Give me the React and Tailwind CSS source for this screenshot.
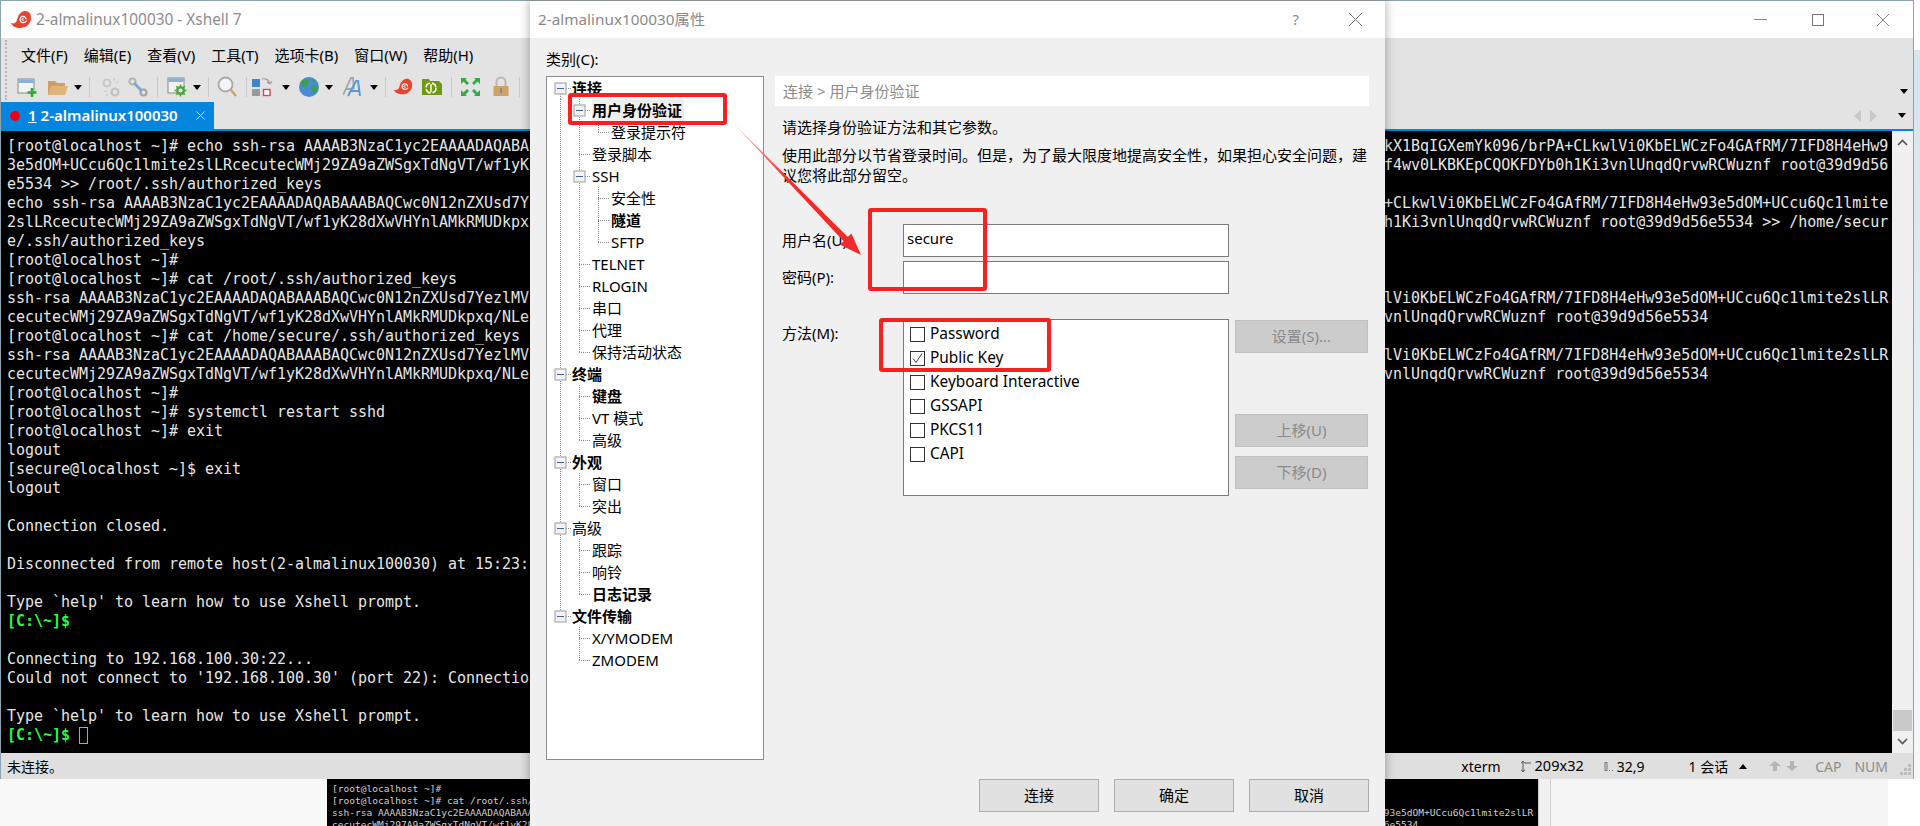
import React from "react";

const R1 = "lVi0KbELWCzFo4GAfRM/7IFD8H4eHw93e5dOM+UCcu6Qc1lmite2slLR";
const R2 = "vnlUnqdQrvwRCWuznf root@39d9d56e5534";
const L1 = "ssh-rsa AAAAB3NzaC1yc2EAAAADAQABAAABAQCwc0N12nZXUsd7YezlMVv";
const L2 = "cecutecWMj29ZA9aZWSgxTdNgVT/wf1yK28dXwVHYnlAMkRMUDkpxq/NLek";
const P = "[root@localhost ~]#";
const HELP = "Type `help' to learn how to use Xshell prompt.";
const LINES = [
  [P + " echo ssh-rsa AAAAB3NzaC1yc2EAAAADAQABAA", "kX1BqIGXemYk096/brPA+CLkwlVi0KbELWCzFo4GAfRM/7IFD8H4eHw9"],
  ["3e5dOM+UCcu6Qc1lmite2slLRcecutecWMj29ZA9aZWSgxTdNgVT/wf1yK28", "f4wv0LKBKEpCQOKFDYb0h1Ki3vnlUnqdQrvwRCWuznf root@39d9d56"],
  ["e5534 >> /root/.ssh/authorized_keys"],
  ["echo ssh-rsa AAAAB3NzaC1yc2EAAAADAQABAAABAQCwc0N12nZXUsd7Yez", "+CLkwlVi0KbELWCzFo4GAfRM/7IFD8H4eHw93e5dOM+UCcu6Qc1lmite"],
  ["2slLRcecutecWMj29ZA9aZWSgxTdNgVT/wf1yK28dXwVHYnlAMkRMUDkpxq/", "h1Ki3vnlUnqdQrvwRCWuznf root@39d9d56e5534 >> /home/secur"],
  ["e/.ssh/authorized_keys"],
  [P],
  [P + " cat /root/.ssh/authorized_keys"],
  [L1, R1],
  [L2, R2],
  [P + " cat /home/secure/.ssh/authorized_keys"],
  [L1, R1],
  [L2, R2],
  [P],
  [P + " systemctl restart sshd"],
  [P + " exit"],
  ["logout"],
  ["[secure@localhost ~]$ exit"],
  ["logout"],
  [""],
  ["Connection closed."],
  [""],
  ["Disconnected from remote host(2-almalinux100030) at 15:23:10."],
  [""],
  [HELP],
  ["[C:\\~]$", null, "green"],
  [""],
  ["Connecting to 192.168.100.30:22..."],
  ["Could not connect to '192.168.100.30' (port 22): Connection failed."],
  [""],
  [HELP],
  ["[C:\\~]$", null, "cursor"],
];

const TREE = [
  [0, "连接", 1],
  [1, "用户身份验证", 1, 1, 1],
  [2, "登录提示符"],
  [1, "登录脚本"],
  [1, "SSH", 0, 1],
  [2, "安全性"],
  [2, "隧道", 1],
  [2, "SFTP"],
  [1, "TELNET"],
  [1, "RLOGIN"],
  [1, "串口"],
  [1, "代理"],
  [1, "保持活动状态"],
  [0, "终端", 1],
  [1, "键盘", 1],
  [1, "VT 模式"],
  [1, "高级"],
  [0, "外观", 1],
  [1, "窗口"],
  [1, "突出"],
  [0, "高级"],
  [1, "跟踪"],
  [1, "响铃"],
  [1, "日志记录", 1],
  [0, "文件传输", 1],
  [1, "X/YMODEM"],
  [1, "ZMODEM"],
];

const hasNextSibling = (i) => {
  const lv = TREE[i][0];
  for (let j = i + 1; j < TREE.length; j++) {
    if (TREE[j][0] < lv) return false;
    if (TREE[j][0] === lv) return true;
  }
  return false;
};
const ancestorOf = (i, lv) => {
  for (let j = i - 1; j >= 0; j--) if (TREE[j][0] === lv) return j;
  return -1;
};
const GX = [13, 32, 51];

function Guide({ i }) {
  const [lv, , , exp] = TREE[i];
  const isExp = exp || lv === 0;
  const W = [25, 45, 64][lv];
  const x = GX[lv];
  const dot = { stroke: "#8a8a8a", strokeWidth: 1, strokeDasharray: "1 1", fill: "none" };
  const parts = [];
  for (let a = 0; a < lv; a++) {
    const anc = ancestorOf(i, a);
    if (anc >= 0 && hasNextSibling(anc)) parts.push(<path key={a} d={`M${GX[a] + 0.5} 0V22`} {...dot} />);
  }
  return (
    <svg width={W} height="22" className="shrink-0">
      {parts}
      <path d={`M${x + 0.5} ${i === 0 ? 11 : 0}V${hasNextSibling(i) ? 22 : 11}`} {...dot} />
      <path d={`M${x} 11.5H${x + 12}`} {...dot} />
      {isExp && (
        <g>
          <rect x={x - 5} y="6" width="11" height="11" fill="#f4f4f4" stroke="#9a9a9a" />
          <path d={`M${x - 3} 11.5H${x + 4}`} stroke="#3f5fa8" />
        </g>
      )}
    </svg>
  );
}

const Snail = ({ s = 22 }) => (
  <svg width={s} height={s} viewBox="0 0 22 22" className="shrink-0">
    <path d="M1 14c3 1 5 0 6-3C8 6 11 2 15 2c4 0 6 3 6 7 0 6-5 10-11 10-4 0-8-2-9-5z" fill="#e8432f" />
    <path d="M16 10.500c0-2-2-3.500-3.800-3-2 .6-2.800 3-1.600 4.800 1.500 2 4.800 1.600 6-.5" fill="none" stroke="#fff" strokeWidth="1.300" />
    <path d="M14 10c-.5-.8-1.800-.6-2 .3-.1 1 1 1.500 1.800 1" fill="none" stroke="#fff" strokeWidth="1" />
  </svg>
);

const Drop = ({ className = "" }) => (
  <svg width="8" height="5" viewBox="0 0 8 5" className={"shrink-0 " + className}>
    <path d="M0 0h8L4 5z" fill="#000" />
  </svg>
);
const Sep = ({ className = "" }) => <span className={"h-[20px] w-px shrink-0 bg-[#c9c9c9] " + className} />;

const IconNew = () => (
  <svg width="20" height="22" viewBox="0 0 20 22" className="shrink-0">
    <rect x="1" y="3" width="16" height="14" fill="#f2f2f2" stroke="#8a8a8a" />
    <rect x="1.500" y="3.500" width="15" height="3.500" fill="#8ab0da" />
    <path d="M15 12v9M10.500 16.500h9" stroke="#2bab3b" strokeWidth="2.600" />
  </svg>
);
const IconFolder = () => (
  <svg width="20" height="22" viewBox="0 0 20 22" className="ml-[11px] shrink-0">
    <path d="M0 5h7l2 2h8v12H0z" fill="#cf9f63" />
    <path d="M3 10h17l-3 9H0z" fill="#e0b47c" />
  </svg>
);
const IconBroken = () => (
  <svg width="20" height="22" viewBox="0 0 20 22" className="ml-[11px] shrink-0" opacity=".55">
    <circle cx="6" cy="7" r="3.500" fill="none" stroke="#b4b4b4" strokeWidth="2.200" />
    <circle cx="14" cy="16" r="3.500" fill="none" stroke="#a8a8a8" strokeWidth="2.200" />
    <path d="M13 2v3M17 5l-2 2M3 15h3M5 20l2-2" stroke="#bcbcbc" strokeWidth="1.500" />
  </svg>
);
const IconLink = () => (
  <svg width="20" height="22" viewBox="0 0 20 22" className="ml-[7px] shrink-0">
    <circle cx="4.500" cy="5.500" r="3" fill="none" stroke="#b5b5b5" strokeWidth="2.200" />
    <circle cx="15.500" cy="16.500" r="3" fill="none" stroke="#a5a5a5" strokeWidth="2.200" />
    <path d="M6 7l8 8" stroke="#7fa8d8" strokeWidth="3" />
  </svg>
);
const IconGear = () => (
  <svg width="20" height="22" viewBox="0 0 20 22" className="ml-[9px] shrink-0">
    <rect x="1" y="2" width="16" height="15" fill="#f2f2f2" stroke="#8a8a8a" />
    <rect x="1.500" y="2.500" width="15" height="3.500" fill="#8ab0da" />
    <circle cx="13.500" cy="14.500" r="3.300" fill="#f2f2f2" stroke="#49a83a" strokeWidth="2.400" />
    <path d="M13.500 8.500v2.500M13.500 18v2.500M7.500 14.500h2.500M17 14.500h2.500M9.300 10.300l1.800 1.800M16 17l1.800 1.800M9.300 18.700l1.800-1.800M16 12l1.800-1.800" stroke="#49a83a" strokeWidth="1.500" />
  </svg>
);
const IconSearch = () => (
  <svg width="20" height="22" viewBox="0 0 20 22" className="ml-[8px] shrink-0">
    <circle cx="8.500" cy="8.500" r="7" fill="#f4f4f4" stroke="#a9a9a9" strokeWidth="1.800" />
    <path d="M13.800 13.800L19 20" stroke="#cfa26a" strokeWidth="2.400" />
  </svg>
);
const IconLayout = () => (
  <svg width="22" height="22" viewBox="0 0 22 22" className="ml-[4px] shrink-0">
    <rect x="1" y="3" width="8" height="8" fill="#3f86c8" />
    <rect x="1" y="13" width="8" height="7" fill="#999" />
    <rect x="12.500" y="13.500" width="6.500" height="6" fill="#fff" stroke="#d8474f" strokeWidth="1.400" />
    <path d="M11 3c4-1 7 1 8 5M19 8l2-3M19 8l-3-2" fill="none" stroke="#9a9a9a" strokeWidth="1.200" />
  </svg>
);
const IconGlobe = () => (
  <svg width="20" height="22" viewBox="0 0 20 22" className="ml-[9px] shrink-0">
    <circle cx="10" cy="11" r="10" fill="#4a8cd2" />
    <path d="M5 3c3 0 5 1 5 3s-2 2-2 4-3 2-4 0-2-2-3-2c0-2 2-4 4-5zM13 10c3-1 6 0 6 2s-2 5-4 6c-1-2-1-3-2-4s-1-3 0-4zM12 3c2 0 3 1 4 2l-2 1z" fill="#3f9e55" />
  </svg>
);
const IconFont = () => (
  <svg width="20" height="22" viewBox="0 0 20 22" className="ml-[10px] shrink-0">
    <path d="M0 19L8 2h2l1 11M3 13h7" fill="none" stroke="#a8a8a8" strokeWidth="1.800" />
    <path d="M5 20L13 5h2l2 15M8 15h8" fill="none" stroke="#5b9ad8" strokeWidth="2" />
  </svg>
);
const IconGreenFolder = () => (
  <svg width="20" height="22" viewBox="0 0 20 22" className="ml-[9px] shrink-0">
    <path d="M0 3h7l1 2h9l3 3v11H0z" fill="#6f9a10" />
    <circle cx="9" cy="12" r="5" fill="none" stroke="#fff" strokeWidth="1.600" strokeDasharray="6 2" />
    <path d="M9 8v8" stroke="#fff" strokeWidth="1.400" />
  </svg>
);
const IconFull = () => (
  <svg width="19" height="22" viewBox="0 0 19 22" className="ml-[9px] shrink-0">
    <path d="M0 2h6L4.500 3.500 8 7 6 9 2.500 5.500 0 8zM19 2h-6l1.500 1.500L11 7l2 2 3.500-3.500L19 8zM0 20h6l-1.500-1.500L8 15l-2-2-3.500 3.500L0 14zM19 20h-6l1.500-1.500L11 15l2-2 3.500 3.500L19 14z" fill="#34a94a" />
  </svg>
);
const IconLock = () => (
  <svg width="16" height="22" viewBox="0 0 16 22" className="ml-[13px] shrink-0">
    <path d="M3.500 10V6a4.500 4.500 0 0 1 9 0v4" fill="none" stroke="#b8b8b8" strokeWidth="2" />
    <rect x="0.500" y="10" width="15" height="10" fill="#cfa268" />
    <rect x="7" y="12" width="2" height="5" fill="#8c8c8c" />
  </svg>
);

function Check({ on, label }) {
  return (
    <div className="flex h-[24px] items-center pl-[6px]">
      <span className="flex h-[15px] w-[15px] shrink-0 items-center justify-center border border-[#333] bg-white">
        {on && (
          <svg width="13" height="13" viewBox="0 0 13 13">
            <path d="M2 6.500l3 4 6-9" fill="none" stroke="#444" strokeWidth="1" />
          </svg>
        )}
      </span>
      <span className="ml-[5px] text-[15.4px]">{label}</span>
    </div>
  );
}

const FlatBtn = ({ children, className = "" }) => (
  <div className={"flex h-[33px] w-[133px] items-center justify-center border border-[#bfbfbf] bg-[#cccccc] text-[#8a8a8a] " + className}>{children}</div>
);
const DlgBtn = ({ children }) => (
  <div className="flex h-[33px] w-[120px] items-center justify-center border border-[#adadad] bg-[#e1e1e1] text-black">{children}</div>
);

const MINI_L = [
  "",
  "[root@localhost ~]#",
  "[root@localhost ~]# cat /root/.ssh/authorized_keys",
  "ssh-rsa AAAAB3NzaC1yc2EAAAADAQABAAABAQCwc0N12nZXUsd7Yez",
  "cecutecWMj297A9aZWSgxTdNgVT/wf1yK28dXwVHYnlAMkRMUDkpxq",
];

export default function App() {
  return (
    <div className="relative flex h-[826px] w-[1920px] flex-col overflow-hidden bg-white font-['Noto_Sans','Noto_Sans_CJK_SC',sans-serif]">
      <div className="flex h-[779px] shrink-0">
        <div className="flex w-[1914px] shrink-0 flex-col border-t border-l border-r border-[#8da3ad] shadow-[0_1px_4px_rgba(0,0,0,0.45)]">
          {/* title bar */}
          <div className="flex h-[37px] shrink-0 items-center bg-white pl-[9px]">
            <Snail s={22} />
            <span className="ml-[4px] text-[15.4px] text-[#8c8c8c]">2-almalinux100030 - Xshell 7</span>
            <div className="ml-auto flex items-center text-[#8a8a8a]">
              <span className="h-px w-[13px] bg-[#8a8a8a]" />
              <span className="ml-[45px] h-[12px] w-[12px] border border-[#777]" />
              <svg width="14" height="14" viewBox="0 0 14 14" className="ml-[52px] mr-[23px]">
                <path d="M1 1l12 12M13 1L1 13" stroke="#8a8a8a" strokeWidth="1" />
              </svg>
            </div>
          </div>
          {/* menu + toolbar */}
          <div className="relative h-[64px] shrink-0 bg-[#e3e3e3]">
            <div className="absolute left-[4px] top-[2px] h-[60px] w-[2px] border-l-2 border-dotted border-[#b5b5b5]" />
            <div className="flex h-[34px] items-center gap-[16px] pl-[20px] text-[15px] text-black">
              {["文件(F)", "编辑(E)", "查看(V)", "工具(T)", "选项卡(B)", "窗口(W)", "帮助(H)"].map((m) => (
                <span key={m}>{m}</span>
              ))}
            </div>
            <div className="flex h-[30px] items-center pl-[16px]">
              <IconNew />
              <IconFolder />
              <Drop className="ml-[6px]" />
              <Sep className="ml-[7px]" />
              <IconBroken />
              <IconLink />
              <Sep className="ml-[9px]" />
              <IconGear />
              <Drop className="ml-[6px]" />
              <Sep className="ml-[7px]" />
              <IconSearch />
              <Sep className="ml-[9px]" />
              <IconLayout />
              <Drop className="ml-[9px]" />
              <IconGlobe />
              <Drop className="ml-[6px]" />
              <IconFont />
              <Drop className="ml-[7px]" />
              <Sep className="ml-[7px]" />
              <span className="ml-[7px] flex"><Snail s={20} /></span>
              <IconGreenFolder />
              <Sep className="ml-[9px]" />
              <IconFull />
              <IconLock />
              <Sep className="ml-[10px]" />
              <Drop className="ml-auto mr-[5px] mt-[8px]" />
            </div>
          </div>
          {/* tabs */}
          <div className="flex h-[27px] shrink-0 items-center bg-[#e3e3e3]">
            <div className="flex h-full w-[213px] items-center bg-[#0685de] pl-[9px] text-[15px] font-semibold text-white">
              <span className="h-[10px] w-[10px] rounded-full bg-[#f0000f]" />
              <span className="ml-[8px] underline">1</span>
              <span className="ml-[4px]">2-almalinux100030</span>
              <svg width="9" height="9" viewBox="0 0 9 9" className="ml-auto mr-[9px]">
                <path d="M0.500 0.500l8 8M8.500 0.500l-8 8" stroke="#cfe6f7" />
              </svg>
            </div>
            <div className="ml-auto flex items-center pr-[7px]">
              <span className="h-0 w-0 border-y-[6px] border-r-[7px] border-y-transparent border-r-[#c8c8c8]" />
              <span className="ml-[9px] h-0 w-0 border-y-[6px] border-l-[7px] border-y-transparent border-l-[#c8c8c8]" />
              <Drop className="ml-[21px]" />
            </div>
          </div>
          <div className="h-[2px] shrink-0 bg-[#0685de]" />
          {/* terminal */}
          <div className="flex h-[622px] shrink-0">
            <div className="w-[1891px] shrink-0 overflow-hidden bg-black pl-[6px] pt-[6px] font-['DejaVu_Sans_Mono',monospace] text-[15px] leading-[19px] tracking-[-0.03px] text-[#e6e6e6]">
              {LINES.map((l, i) => (
                <div key={i} className={"flex h-[19px] items-center whitespace-pre " + (l[2] ? "font-bold text-[#1fff3f]" : "")}>
                  {l[1] ? l[0].slice(0, 58).padEnd(153) + l[1] : l[0]}
                  {l[2] === "cursor" && <span className="ml-[9px] h-[17px] w-[9px] border border-[#1fff3f]" />}
                </div>
              ))}
            </div>
            <div className="flex flex-1 flex-col items-center bg-[#f0f0f0]">
              <svg width="11" height="7" viewBox="0 0 11 7" className="mt-[8px]">
                <path d="M1 6l4.500-4.500L10 6" fill="none" stroke="#555" strokeWidth="1.600" />
              </svg>
              <div className="mt-auto h-[21px] w-[19px] bg-[#c9c9c9]" />
              <svg width="11" height="7" viewBox="0 0 11 7" className="mb-[8px] mt-[7px]">
                <path d="M1 1l4.500 4.500L10 1" fill="none" stroke="#555" strokeWidth="1.600" />
              </svg>
            </div>
          </div>
          {/* status */}
          <div className="flex flex-1 items-center bg-[#dfdfdf] pl-[6px] text-[14px] text-black">
            <span>未连接。</span>
            <div className="ml-auto flex items-center">
              <span>xterm</span>
              <svg width="10" height="11" viewBox="0 0 10 11" className="ml-[20px]">
                <path d="M2 1v9M0 2.500L2 0l2 2.500M0 8.500L2 11l2-2.500M4 2h6" fill="none" stroke="#555" strokeWidth="1" />
              </svg>
              <span className="ml-[4px] text-[14.5px]">209x32</span>
              <svg width="10" height="9" viewBox="0 0 10 9" className="ml-[20px]">
                <path d="M1 0v9M3 0v9M1 .5h2M1 8.500h2M5 8.500h1M8 8.500h1" stroke="#777" strokeWidth="1" />
              </svg>
              <span className="ml-[3px]">32,9</span>
              <span className="ml-[44px]">1 会话</span>
              <svg width="8" height="5" viewBox="0 0 8 5" className="ml-[11px]">
                <path d="M0 5h8L4 0z" fill="#000" />
              </svg>
              <svg width="12" height="10" viewBox="0 0 12 10" className="ml-[22px]">
                <path d="M6 0l6 5H8v5H4V5H0z" fill="#b5b5b5" />
              </svg>
              <svg width="12" height="10" viewBox="0 0 12 10" className="ml-[5px]">
                <path d="M6 10L0 5h4V0h4v5h4z" fill="#b5b5b5" />
              </svg>
              <span className="ml-[17px] text-[#8e8e8e]">CAP</span>
              <span className="ml-[13px] text-[#8e8e8e]">NUM</span>
              <svg width="13" height="13" viewBox="0 0 13 13" className="ml-[11px] mr-[1px] mt-[7px]">
                <path d="M9 1h3v3H9zM5 5h3v3H5zM9 5h3v3H9zM1 9h3v3H1zM5 9h3v3H5zM9 9h3v3H9z" fill="#bdbdbd" />
              </svg>
            </div>
          </div>
        </div>
        <div className="flex flex-1 flex-col">
          <div className="h-[50px] bg-white" />
          <div className="flex-1 bg-gradient-to-b from-[#d3e6ee] to-[#f6f8f9]" />
        </div>
      </div>

      {/* window behind */}
      <div className="flex flex-1">
        <div className="w-[327px] shrink-0 bg-[#f8f8f8]" />
        <div className="h-full w-[1211px] shrink-0 overflow-hidden whitespace-pre bg-black pl-[5px] font-['DejaVu_Sans_Mono',monospace] text-[9.55px] leading-[12px] text-[#cfcfcf]">
          {MINI_L.map((t, i) => (
            <div key={i} className="h-[12px] first:h-[4px]">
              {i === 3 ? t.slice(0, 40).padEnd(183) + "93e5dOM+UCcu6Qc1lmite2slLR" : i === 4 ? t.slice(0, 40).padEnd(183) + "6e5534" : t}
            </div>
          ))}
        </div>
        <div className="w-[13px] shrink-0 border-x border-[#cfcfcf] bg-[#f0f0f0]" />
        <div className="w-[337px] shrink-0 bg-[#f5f5f5]" />
        <div className="flex-1 bg-white" />
      </div>

      {/* dialog */}
      <div className="absolute left-[530px] top-0 flex h-[826px] w-[855px] flex-col border-t border-[#8a8f92] bg-[#f0f0f0] text-[15px] text-black shadow-[0_0_10px_rgba(0,0,0,0.35)]">
        <div className="flex h-[37px] shrink-0 items-center bg-white pl-[8px] text-[15.3px] text-[#8a8a8a]">
          <span>2-almalinux100030属性</span>
          <span className="ml-auto text-[15px]">?</span>
          <svg width="15" height="15" viewBox="0 0 15 15" className="ml-[49px] mr-[22px]">
            <path d="M1 1l13 13M14 1L1 14" stroke="#777" strokeWidth="1" />
          </svg>
        </div>
        <div className="flex h-[38px] shrink-0 items-center pl-[16px] pt-[4px]">类别(C):</div>
        <div className="flex h-[684px] shrink-0 pl-[16px]">
          <div className="w-[218px] shrink-0 border border-[#8c8c8c] bg-white">
            {TREE.map((r, i) => {
              const [lv, label, bold, , sel] = r;
              return (
                <div key={i} className="flex h-[22px] items-center whitespace-nowrap leading-[22px]">
                  <Guide i={i} />
                  <span className={(bold ? "font-bold " : "") + (sel ? "bg-[#efefef] pr-[2px] " : "")}>{label}</span>
                </div>
              );
            })}
          </div>
          <div className="ml-[11px] flex w-[594px] flex-col">
            <div className="flex h-[30px] items-center bg-white pl-[8px] text-[#8c8c8c]">连接 &gt; 用户身份验证</div>
            <div className="mt-[11px] pl-[7px] leading-[20px]">请选择身份验证方法和其它参数。</div>
            <div className="mt-[8px] pl-[7px] leading-[20px]">
              使用此部分以节省登录时间。但是，为了最大限度地提高安全性，如果担心安全问题，建
              <br />
              议您将此部分留空。
            </div>
            <div className="mt-[39px] flex items-center pl-[7px]">
              <span className="w-[121px]">用户名(U):</span>
              <div className="flex h-[33px] w-[326px] items-center border border-[#7a7a7a] bg-white pb-[4px] pl-[3px]">secure</div>
            </div>
            <div className="mt-[4px] flex items-center pl-[7px]">
              <span className="w-[121px]">密码(P):</span>
              <div className="h-[33px] w-[326px] border border-[#7a7a7a] bg-white" />
            </div>
            <div className="mt-[25px] flex pl-[7px]">
              <span className="w-[121px] pt-[3px]">方法(M):</span>
              <div className="h-[177px] w-[326px] border border-[#7a7a7a] bg-white pt-[2px]">
                <Check label="Password" />
                <Check on label="Public Key" />
                <Check label="Keyboard Interactive" />
                <Check label="GSSAPI" />
                <Check label="PKCS11" />
                <Check label="CAPI" />
              </div>
              <div className="ml-[6px] flex flex-col pt-[1px]">
                <FlatBtn>设置(S)...</FlatBtn>
                <FlatBtn className="mt-[61px]">上移(U)</FlatBtn>
                <FlatBtn className="mt-[9px]">下移(D)</FlatBtn>
              </div>
            </div>
          </div>
        </div>
        <div className="mt-[19px] flex justify-end gap-[15px] pr-[16px]">
          <DlgBtn>连接</DlgBtn>
          <DlgBtn>确定</DlgBtn>
          <DlgBtn>取消</DlgBtn>
        </div>
      </div>

      {/* annotations */}
      <div className="absolute left-[568px] top-[93px] h-[32px] w-[159px] rounded-[3px] border-[4px] border-[#fb1f1f]" />
      <div className="absolute left-[868px] top-[208px] h-[83px] w-[119px] rounded-[3px] border-[4px] border-[#fb1f1f]" />
      <div className="absolute left-[879px] top-[318px] h-[54px] w-[172px] rounded-[3px] border-[4px] border-[#fb1f1f]" />
      <svg width="140" height="140" viewBox="730 120 140 140" className="absolute left-[730px] top-[120px]">
        <defs>
          <linearGradient id="arrowFade" x1="735" y1="125" x2="790" y2="180" gradientUnits="userSpaceOnUse">
            <stop offset="0" stopColor="#fbb" />
            <stop offset="1" stopColor="#f32a2a" />
          </linearGradient>
        </defs>
        <path d="M735 125L847.800 237.100L851.400 233.600L861 255L840 244.800L843.600 241.300Z" fill="url(#arrowFade)" />
      </svg>
    </div>
  );
}
